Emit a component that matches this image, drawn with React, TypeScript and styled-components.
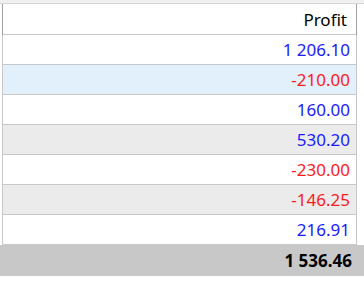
import { createGlobalStyle, styled } from "styled-components";

const GlobalStyle = createGlobalStyle`
  body {
    margin: 0;
    background: #ffffff;
    font-family: "Noto Sans", "Open Sans", sans-serif;
  }
`;

const Wrapper = styled.div`
  width: 364px;
  height: 289px;
  background: #ffffff;
`;

const TopStrip = styled.div`
  height: 3px;
  background: #f0f0f0;
  border-bottom: 1px solid #d4d4d4;
`;

const Table = styled.div`
  margin-left: 2px;
  width: 353px;
  border-left: 1px solid #c8c8c8;
  border-right: 1px solid #c8c8c8;
`;

const Header = styled.div`
  display: flex;
  justify-content: flex-end;
  align-items: center;
  height: 30px;
  padding-right: 9px;
  border-bottom: 1px solid #c8c8c8;
  box-shadow: -1px 0 0 #a0a0a0, 1px 0 0 #a0a0a0;
  font-size: 17px;
  color: #000000;
`;

const Row = styled.div<{ $bg: string; $color: string }>`
  display: flex;
  justify-content: flex-end;
  align-items: center;
  height: 29px;
  padding-right: 6px;
  border-bottom: 1px solid #c8c8c8;
  background: ${(p) => p.$bg};
  color: ${(p) => p.$color};
  font-size: 17px;
`;

const Summary = styled.div`
  display: flex;
  justify-content: flex-end;
  align-items: center;
  height: 31px;
  padding-right: 12px;
  background: #c8c8c8;
  color: #000000;
  font-size: 17px;
  font-weight: bold;
`;

const BLUE = "#1a1aff";
const RED = "#ff1a1a";

const rows = [
  { value: "1 206.10", bg: "#ffffff", color: BLUE },
  { value: "-210.00", bg: "#e1f0fb", color: RED },
  { value: "160.00", bg: "#ffffff", color: BLUE },
  { value: "530.20", bg: "#ebebeb", color: BLUE },
  { value: "-230.00", bg: "#ffffff", color: RED },
  { value: "-146.25", bg: "#ebebeb", color: RED },
  { value: "216.91", bg: "#ffffff", color: BLUE },
];

export default function App() {
  return (
    <Wrapper>
      <GlobalStyle />
      <TopStrip />
      <Table>
        <Header>Profit</Header>
        {rows.map((r, i) => (
          <Row key={i} $bg={r.bg} $color={r.color}>
            {r.value}
          </Row>
        ))}
      </Table>
      <Summary>1 536.46</Summary>
    </Wrapper>
  );
}
